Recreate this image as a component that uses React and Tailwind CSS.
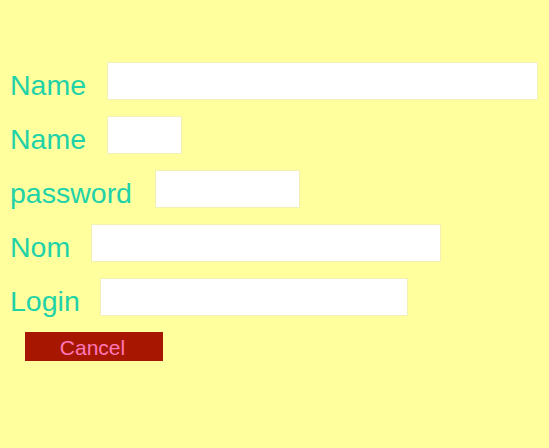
import React from "react";

const rows = [
  { label: "Name", w: "w-[431px]", ml: "ml-[21px]" },
  { label: "Name", w: "w-[75px]", ml: "ml-[21px]" },
  { label: "password", w: "w-[145px]", ml: "ml-[23px]" },
  { label: "Nom", w: "w-[350px]", ml: "ml-[21px]" },
  { label: "Login", w: "w-[308px]", ml: "ml-[20px]" },
];

export default function App() {
  return (
    <div
      className="w-[549px] h-[448px] bg-[#ffff9e] pt-[62px] pl-[10px]"
      style={{ fontFamily: '"Liberation Sans", Arial, sans-serif' }}
    >
      <div className="flex flex-col gap-[16px]">
        {rows.map((r, i) => (
          <div key={i} className="flex items-center h-[38px]">
            <span className="text-[28.5px] leading-[33px] pt-[8px] text-[#1fd2a8]">{r.label}</span>
            <input
              type="text"
              className={`${r.w} ${r.ml} h-[38px] bg-white border border-[#f2f0b4] outline-none`}
            />
          </div>
        ))}
      </div>
      <button className="mt-[16px] ml-[15px] w-[138px] h-[29px] bg-[#a61600] text-[#ff78b8] text-[21px] leading-[29px] flex items-center justify-center pt-[1px] pr-[3px]">
        Cancel
      </button>
    </div>
  );
}
